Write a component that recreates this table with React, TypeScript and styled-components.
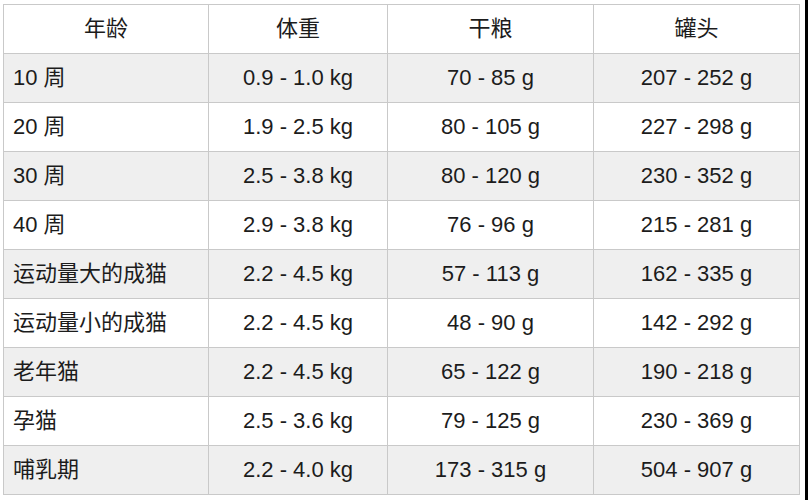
import React from "react";
import styled, { createGlobalStyle } from "styled-components";

const GlobalStyle = createGlobalStyle`
  html, body {
    margin: 0;
    padding: 0;
    background: #ffffff;
  }
  body {
    font-family: "Liberation Sans", "Noto Sans CJK SC", Arial, sans-serif;
  }
`;

const Page = styled.div`
  box-sizing: border-box;
  width: 808px;
  height: 500px;
  padding: 4px 0 0 3px;
  background: #ffffff;
  border-right: 3px solid #000000;
  overflow: hidden;
`;

const Table = styled.table`
  border-collapse: collapse;
  table-layout: fixed;
  width: 796px;
  border: 1px solid #cfcfcf;
  font-family: "Liberation Sans", "Noto Sans CJK SC", Arial, sans-serif;
  font-size: 22px;
  color: #1c1c1c;
`;

const Row = styled.tr<{ $shaded?: boolean }>`
  height: 49px;
  background: ${(p) => (p.$shaded ? "#efefef" : "#ffffff")};
`;

const HeadCell = styled.th`
  border: 1px solid #c9c9c9;
  font-weight: normal;
  text-align: center;
  vertical-align: middle;
  padding: 0;
  line-height: 1;
`;

const Cell = styled.td<{ $left?: boolean }>`
  border: 1px solid #c9c9c9;
  text-align: ${(p) => (p.$left ? "left" : "center")};
  padding: 0 0 0 ${(p) => (p.$left ? "9px" : "0")};
  vertical-align: middle;
  line-height: 1;
  white-space: nowrap;
`;

const rows: [string, string, string, string][] = [
  ["10 周", "0.9 - 1.0 kg", "70 - 85 g", "207 - 252 g"],
  ["20 周", "1.9 - 2.5 kg", "80 - 105 g", "227 - 298 g"],
  ["30 周", "2.5 - 3.8 kg", "80 - 120 g", "230 - 352 g"],
  ["40 周", "2.9 - 3.8 kg", "76 - 96 g", "215 - 281 g"],
  ["运动量大的成猫", "2.2 - 4.5 kg", "57 - 113 g", "162 - 335 g"],
  ["运动量小的成猫", "2.2 - 4.5 kg", "48 - 90 g", "142 - 292 g"],
  ["老年猫", "2.2 - 4.5 kg", "65 - 122 g", "190 - 218 g"],
  ["孕猫", "2.5 - 3.6 kg", "79 - 125 g", "230 - 369 g"],
  ["哺乳期", "2.2 - 4.0 kg", "173 - 315 g", "504 - 907 g"],
];

export default function App() {
  return (
    <>
      <GlobalStyle />
      <Page>
        <Table>
          <colgroup>
            <col style={{ width: 205 }} />
            <col style={{ width: 179 }} />
            <col style={{ width: 206 }} />
            <col style={{ width: 206 }} />
          </colgroup>
          <thead>
            <Row>
              <HeadCell>年龄</HeadCell>
              <HeadCell>体重</HeadCell>
              <HeadCell>干粮</HeadCell>
              <HeadCell>罐头</HeadCell>
            </Row>
          </thead>
          <tbody>
            {rows.map((r, i) => (
              <Row key={r[0]} $shaded={i % 2 === 0}>
                <Cell $left>{r[0]}</Cell>
                <Cell>{r[1]}</Cell>
                <Cell>{r[2]}</Cell>
                <Cell>{r[3]}</Cell>
              </Row>
            ))}
          </tbody>
        </Table>
      </Page>
    </>
  );
}
